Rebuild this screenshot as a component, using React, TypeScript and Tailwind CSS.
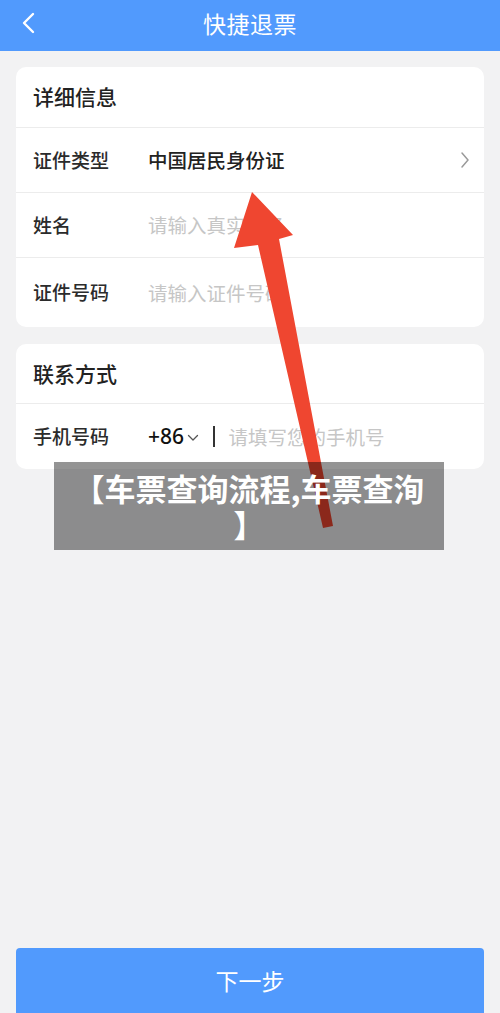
import React from 'react';

const font = { fontFamily: '"Noto Sans CJK SC", "Noto Sans", sans-serif' };

const Row: React.FC<{ label: string; last?: boolean; children: React.ReactNode }> = ({ label, last, children }) => (
  <div className={`flex items-center ${last ? 'h-[69px]' : 'h-[65px] border-b border-[#ececec]'}`}>
    <div className="w-[132px] shrink-0 pl-[17px] text-[19px] font-medium text-[#2b2b2b]">{label}</div>
    <div className="flex-1 flex items-center pr-[14px]">{children}</div>
  </div>
);

export default function App() {
  return (
    <div style={font} className="relative w-[500px] h-[1013px] overflow-hidden bg-[#f2f2f3] flex flex-col">
      {/* Header */}
      <div className="relative h-[51px] bg-[#519afd] flex items-center justify-center shrink-0">
        <svg className="absolute left-[20px] top-[12px]" width="18" height="22" viewBox="0 0 18 22" fill="none">
          <path d="M13 2 L4 11 L13 20" stroke="#fff" strokeWidth="2.4" strokeLinecap="round" strokeLinejoin="round" />
        </svg>
        <span className="text-[23px] text-white tracking-[0.5px] -mt-[4px]">快捷退票</span>
      </div>

      <div className="px-[16px] pt-[16px] flex flex-col gap-[17px]">
        {/* Card 1 */}
        <div className="bg-white rounded-[10px]">
          <div className="h-[61px] flex items-center pl-[17px] border-b border-[#ececec] text-[21px] font-medium text-[#222]">
            详细信息
          </div>
          <Row label="证件类型">
            <span className="text-[19.5px] font-medium text-[#222]">中国居民身份证</span>
            <svg className="ml-auto" width="10" height="18" viewBox="0 0 10 18" fill="none">
              <path d="M2 2 L8 9 L2 16" stroke="#9a9a9a" strokeWidth="1.5" strokeLinecap="round" strokeLinejoin="round" />
            </svg>
          </Row>
          <Row label="姓名">
            <span className="text-[19.5px] text-[#c6c6c6]">请输入真实姓名</span>
          </Row>
          <Row label="证件号码" last>
            <span className="text-[19.5px] text-[#c6c6c6]">请输入证件号码</span>
          </Row>
        </div>

        {/* Card 2 */}
        <div className="bg-white rounded-[10px]">
          <div className="h-[60px] flex items-center pl-[17px] border-b border-[#ececec] text-[21px] font-medium text-[#222]">
            联系方式
          </div>
          <div className="flex items-center h-[65px]">
            <div className="w-[132px] shrink-0 pl-[17px] text-[19px] font-medium text-[#2b2b2b]">手机号码</div>
            <span className="text-[21px] font-medium text-[#111]" style={{ fontFamily: '"Noto Sans", sans-serif' }}>+86</span>
            <svg className="ml-[3px] mt-[2px]" width="12" height="8" viewBox="0 0 12 8" fill="none">
              <path d="M1.5 1.5 L6 6 L10.5 1.5" stroke="#555" strokeWidth="1.3" strokeLinecap="round" strokeLinejoin="round" />
            </svg>
            <div className="ml-[14px] w-[1.5px] h-[21px] bg-[#333]" />
            <span className="ml-[14px] text-[19.5px] text-[#c6c6c6]">请填写您的手机号</span>
          </div>
        </div>
      </div>

      <div className="flex-1" />

      {/* Bottom button */}
      <button className="mx-[16px] h-[65px] rounded-t-[4px] bg-[#519afd] text-white text-[23px] shrink-0">
        下一步
      </button>

      {/* Red arrow annotation */}
      <svg className="absolute left-0 top-0 pointer-events-none" width="500" height="1013" viewBox="0 0 500 1013">
        <polygon points="252,192 293,235 279,239 333,526 323,528 258,245 234,248" fill="#ef4630" />
      </svg>

      {/* Caption overlay */}
      <div className="absolute left-[54px] top-[462px] w-[390px] h-[88px] bg-black/[0.42] flex items-center justify-center text-center text-white font-bold text-[31px] leading-[36px]">
        <p>
          【车票查询流程,车票查洵
          <br />】
        </p>
      </div>
    </div>
  );
}
